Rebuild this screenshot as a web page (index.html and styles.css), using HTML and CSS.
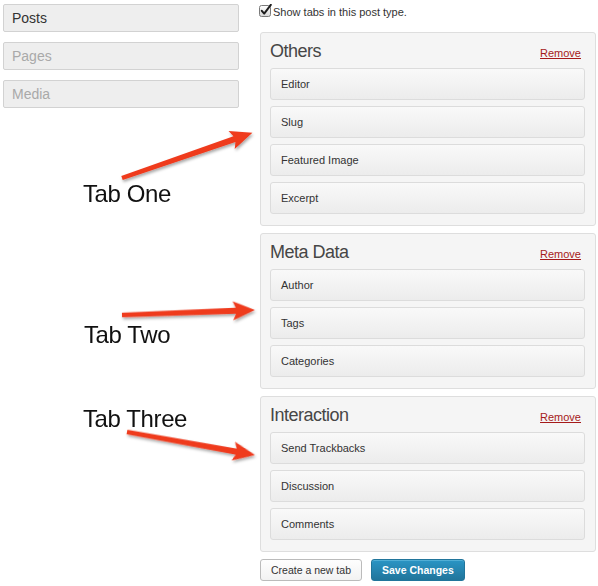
FILE: index.html
```html
<!DOCTYPE html>
<html>
<head>
<meta charset="utf-8">
<title>Tabs</title>
<link rel="stylesheet" href="styles.css">
</head>
<body>
<div class="page">
  <nav class="sidebar">
    <div class="side-item active">Posts</div>
    <div class="side-item">Pages</div>
    <div class="side-item">Media</div>
  </nav>
  <main class="content">
    <label class="show">
      <svg class="checkbox" width="13" height="13" viewBox="0 0 13 13">
        <defs>
          <linearGradient id="cb" x1="0" y1="0" x2="0" y2="1">
            <stop offset="0" stop-color="#ffffff"/>
            <stop offset="1" stop-color="#d8d8d8"/>
          </linearGradient>
        </defs>
        <rect x="0.5" y="1.5" width="11" height="11" rx="2" fill="url(#cb)" stroke="#7a7a7a"/>
        <path d="M2.8 6.8 L5.2 9.6 L11.8 0.8" fill="none" stroke="#1e1e1e" stroke-width="2" stroke-linecap="round" stroke-linejoin="round"/>
      </svg>
      <span>Show tabs in this post type.</span>
    </label>

    <section class="panel">
      <div class="panel-head"><h2>Others</h2><a class="remove" href="#">Remove</a></div>
      <div class="items">
        <div class="item">Editor</div>
        <div class="item">Slug</div>
        <div class="item">Featured Image</div>
        <div class="item">Excerpt</div>
      </div>
    </section>

    <section class="panel">
      <div class="panel-head"><h2>Meta Data</h2><a class="remove" href="#">Remove</a></div>
      <div class="items">
        <div class="item">Author</div>
        <div class="item">Tags</div>
        <div class="item">Categories</div>
      </div>
    </section>

    <section class="panel">
      <div class="panel-head"><h2>Interaction</h2><a class="remove" href="#">Remove</a></div>
      <div class="items">
        <div class="item">Send Trackbacks</div>
        <div class="item">Discussion</div>
        <div class="item">Comments</div>
      </div>
    </section>

    <div class="actions">
      <button class="btn">Create a new tab</button>
      <button class="btn primary">Save Changes</button>
    </div>
  </main>

  <div class="annot">
    <svg class="arrows" width="598" height="586" viewBox="0 0 598 586">
      <defs>
        <filter id="sh" x="-20%" y="-50%" width="140%" height="200%">
          <feDropShadow dx="1" dy="2" stdDeviation="1.5" flood-color="#000" flood-opacity="0.35"/>
        </filter>
      </defs>
      <g filter="url(#sh)" fill="#ef3a1d">
        <path transform="translate(122 178) rotate(-19.09)" d="M0,-2.2 L119,-3 L116,-9.5 L138,0 L116,9.5 L119,3 L0,2.2Z"/>
        <path transform="translate(122 315) rotate(-2.15)" d="M0,-2.2 L114,-3 L111,-9.5 L133,0 L111,9.5 L114,3 L0,2.2Z"/>
        <path transform="translate(127 432) rotate(10.19)" d="M0,-2.2 L111,-3 L108,-9.5 L130,0 L108,9.5 L111,3 L0,2.2Z"/>
      </g>
    </svg>
    <div class="tab-label one">Tab One</div>
    <div class="tab-label two">Tab Two</div>
    <div class="tab-label three">Tab Three</div>
  </div>
</div>
</body>
</html>
```

FILE: styles.css
```css
html, body {
  margin: 0;
  padding: 0;
  background: #ffffff;
}

body {
  font-family: "Liberation Sans", Arial, Helvetica, sans-serif;
  color: #333333;
  width: 598px;
  height: 586px;
  overflow: hidden;
}

.page {
  position: relative;
  display: flex;
  align-items: flex-start;
  padding: 4px 0 0 3px;
}

/* Sidebar */
.sidebar {
  width: 236px;
  display: flex;
  flex-direction: column;
  gap: 10px;
}

.side-item {
  height: 28px;
  box-sizing: border-box;
  border: 1px solid #d2d2d2;
  border-radius: 2px;
  background: #eeeeee;
  font-size: 14px;
  line-height: 26px;
  padding-left: 8px;
  color: #a9a9a9;
}

.side-item.active {
  color: #333333;
}

/* Main column */
.content {
  margin-left: 21px;
  width: 336px;
}

.show {
  display: flex;
  align-items: center;
  height: 16px;
  margin-left: -1px;
  margin-bottom: 12px;
  font-size: 11px;
  color: #333333;
}

.checkbox {
  display: block;
  margin-right: 1px;
  margin-top: -3px;
}

.panel {
  border: 1px solid #dedede;
  border-radius: 3px;
  background: #f5f5f5;
  padding: 0 10px 11px 9px;
  margin-bottom: 7px;
}

.panel-head {
  display: flex;
  justify-content: space-between;
  align-items: baseline;
  padding-top: 7px;
  margin-bottom: 6px;
}

.panel-head h2 {
  margin: 0;
  font-size: 18px;
  line-height: 22px;
  font-weight: normal;
  letter-spacing: -0.5px;
  color: #464646;
}

.remove {
  font-size: 11px;
  color: #a51a1a;
  text-decoration: underline;
  margin-right: 4px;
}

.items {
  display: flex;
  flex-direction: column;
  gap: 6px;
}

.item {
  height: 32px;
  box-sizing: border-box;
  border: 1px solid #dcdcdc;
  border-radius: 3px;
  background: linear-gradient(#f9f9f9, #ececec);
  padding-left: 10px;
  font-size: 11px;
  line-height: 30px;
  color: #333333;
}

.actions {
  display: flex;
  gap: 9px;
  margin-top: 1px;
}

.btn {
  height: 22px;
  box-sizing: border-box;
  padding: 0 10px;
  border: 1px solid #bbbbbb;
  border-radius: 3px;
  background: linear-gradient(#fefefe, #f2f2f2);
  font-family: "Liberation Sans", Arial, Helvetica, sans-serif;
  font-size: 10.5px;
  color: #333333;
  line-height: 20px;
}

.btn.primary {
  border-color: #21759b;
  background: linear-gradient(#2a95c5, #21759b);
  color: #ffffff;
  font-weight: bold;
  box-shadow: inset 0 1px 0 rgba(120, 200, 230, 0.5);
}

/* Annotation overlay */
.annot {
  position: absolute;
  left: 0;
  top: 0;
  width: 598px;
  height: 586px;
  pointer-events: none;
}

.arrows {
  position: absolute;
  left: 0;
  top: 0;
}

.tab-label {
  position: absolute;
  left: 83px;
  font-size: 24px;
  line-height: 24px;
  letter-spacing: -0.4px;
  color: #111111;
}

.tab-label.one { top: 182px; }
.tab-label.two { top: 323px; left: 84px; }
.tab-label.three { top: 407px; }
```
